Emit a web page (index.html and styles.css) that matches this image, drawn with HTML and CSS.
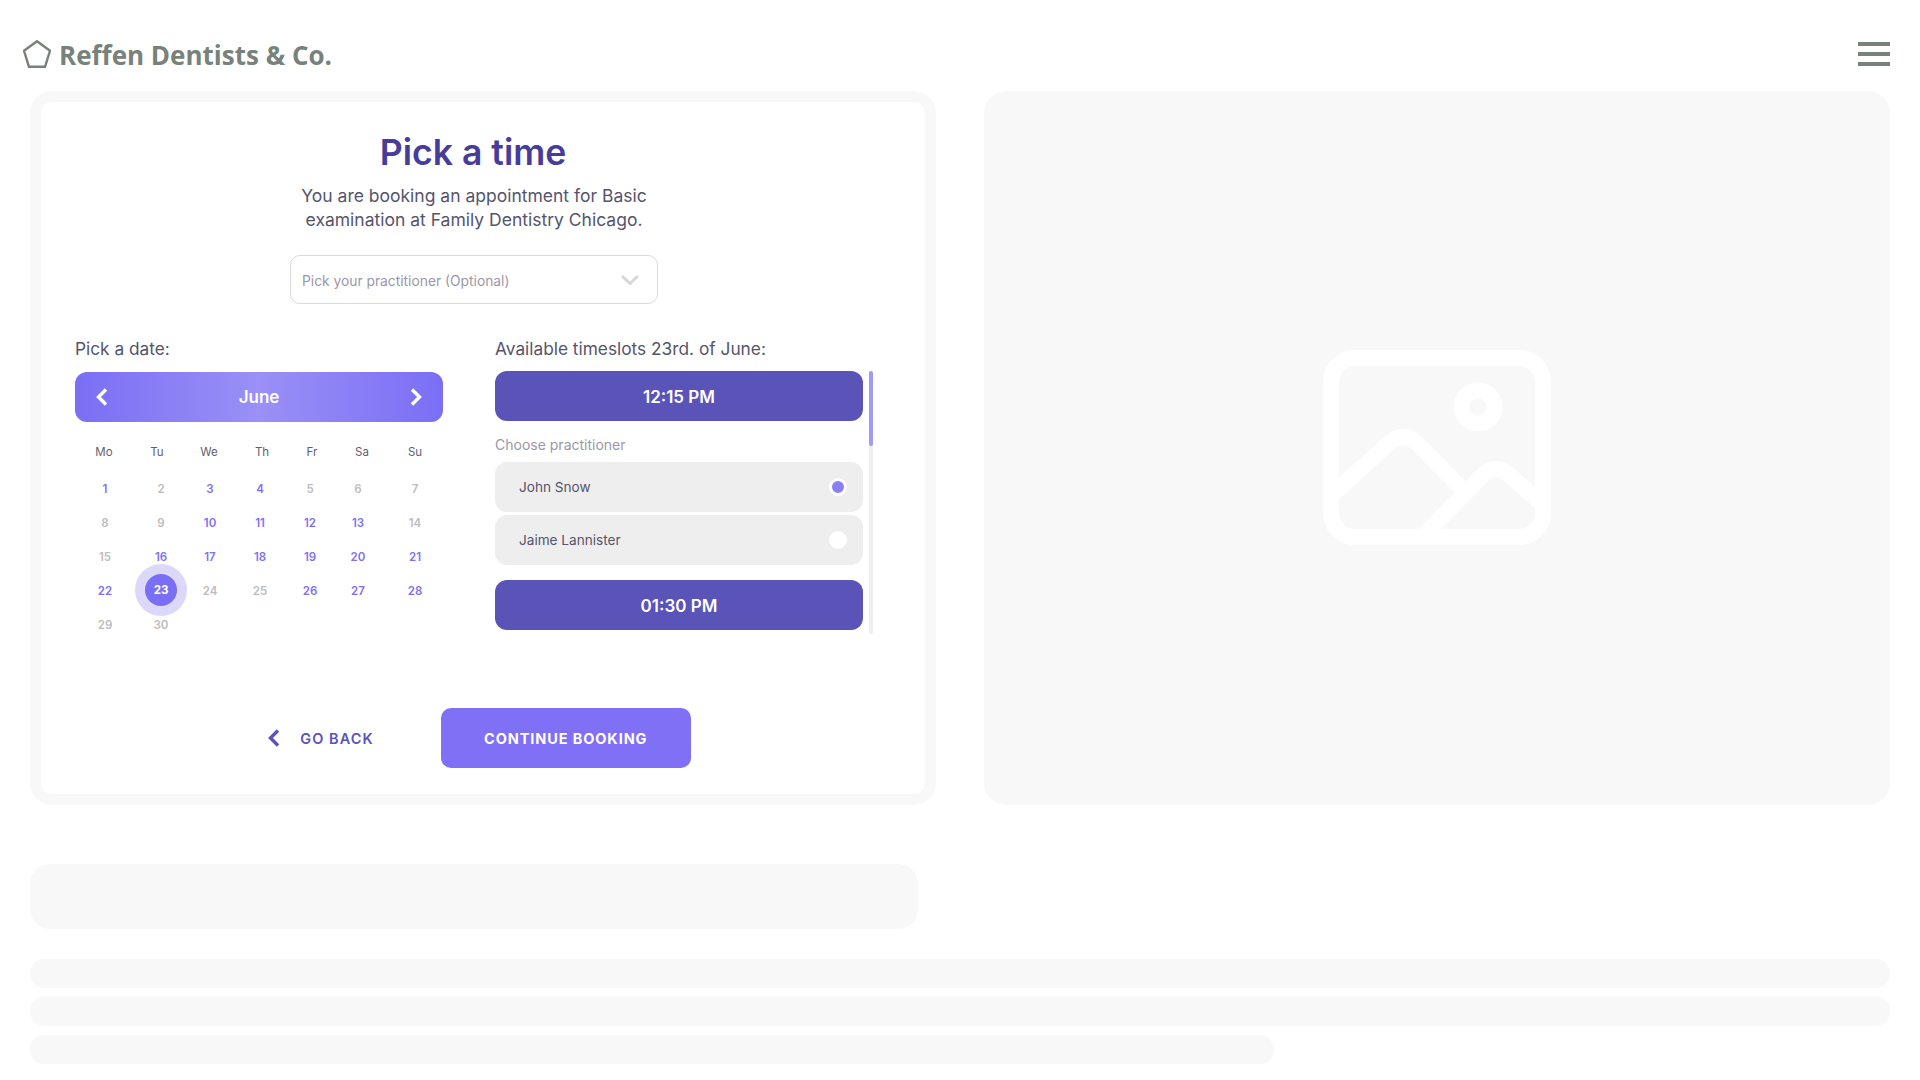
FILE: index.html
```html
<!DOCTYPE html>
<html lang="en">
<head>
    <meta charset="UTF-8">
    <meta name="viewport" content="width=device-width, initial-scale=1.0">
    <title>Reffen Dentists &amp; Co.</title>
    <link rel="stylesheet" href="styles.css">
</head>
<body>
    <header class="site-header">
        <div class="logo">
            <svg class="logo-icon" viewBox="0 0 28 28" fill="none" stroke="currentColor" stroke-width="2.4" stroke-linejoin="round">
                <path d="M14 1.2 L27 10.8 L22 26.8 L6 26.8 L1 10.8 Z"/>
            </svg>
            <span>Reffen Dentists &amp; Co.</span>
        </div>
        <div class="menu-button">
            <span></span>
            <span></span>
            <span></span>
        </div>
    </header>

    <main>
        <section class="top-row">
            <div class="booking-card">
                <h1>Pick a time</h1>
                <p class="intro">You are booking an appointment for Basic<br>examination at Family Dentistry Chicago.</p>

                <div class="select">
                    <span>Pick your practitioner (Optional)</span>
                    <svg class="select-arrow" viewBox="0 0 18 10" fill="none" stroke="currentColor" stroke-width="3">
                        <path d="M1 1 L9 8.5 L17 1"/>
                    </svg>
                </div>

                <div class="columns">
                    <div class="column">
                        <div class="label">Pick a date:</div>
                        <div class="month-bar">
                            <svg class="month-arrow" viewBox="0 0 12 18" fill="none" stroke="currentColor" stroke-width="3.4">
                                <path d="M10 1.5 L2.5 9 L10 16.5"/>
                            </svg>
                            <span>June</span>
                            <svg class="month-arrow" viewBox="0 0 12 18" fill="none" stroke="currentColor" stroke-width="3.4">
                                <path d="M2 1.5 L9.5 9 L2 16.5"/>
                            </svg>
                        </div>

                        <div class="weekdays">
                            <span>Mo</span><span>Tu</span><span>We</span><span>Th</span><span>Fr</span><span>Sa</span><span>Su</span>
                        </div>
                        <div class="days">
                            <span class="open">1</span><span>2</span><span class="open">3</span><span class="open">4</span><span>5</span><span>6</span><span>7</span>
                            <span>8</span><span>9</span><span class="open">10</span><span class="open">11</span><span class="open">12</span><span class="open">13</span><span>14</span>
                            <span>15</span><span class="open">16</span><span class="open">17</span><span class="open">18</span><span class="open">19</span><span class="open">20</span><span class="open">21</span>
                            <span class="open">22</span><span class="selected"><b>23</b></span><span>24</span><span>25</span><span class="open">26</span><span class="open">27</span><span class="open">28</span>
                            <span>29</span><span>30</span>
                        </div>
                    </div>

                    <div class="column">
                        <div class="label">Available timeslots 23rd. of June:</div>
                        <div class="slots-wrap">
                            <div class="slots">
                                <div class="slot">12:15 PM</div>
                                <div class="choose">Choose practitioner</div>
                                <div class="option">
                                    <span>John Snow</span>
                                    <span class="radio checked"></span>
                                </div>
                                <div class="option">
                                    <span>Jaime Lannister</span>
                                    <span class="radio"></span>
                                </div>
                                <div class="slot slot-next">01:30 PM</div>
                            </div>
                            <div class="scrollbar"><div class="scrollbar-thumb"></div></div>
                        </div>
                    </div>
                </div>

                <div class="actions">
                    <div class="go-back">
                        <svg class="back-arrow" viewBox="0 0 12 18" fill="none" stroke="currentColor" stroke-width="3.4">
                            <path d="M10 1.5 L2.5 9 L10 16.5"/>
                        </svg>
                        <span>GO BACK</span>
                    </div>
                    <div class="continue">CONTINUE BOOKING</div>
                </div>
            </div>

            <div class="image-placeholder">
                <svg class="image-icon" viewBox="0 0 228 195" fill="none" stroke="#fff" stroke-width="16">
                    <rect x="8" y="8" width="212" height="179" rx="24"/>
                    <circle cx="155" cy="57" r="16.5"/>
                    <path d="M8 146 L66 93 Q80 81 94 93 L146 146"/>
                    <path d="M99 187 L157 128 Q171 112 185 124 L220 154"/>
                </svg>
            </div>
        </section>

        <div class="block-placeholder"></div>

        <div class="line-placeholders">
            <div class="line"></div>
            <div class="line"></div>
            <div class="line line-short"></div>
        </div>
    </main>
</body>
</html>
```
FILE: styles.css
```css
:root {
    --purple: #7f70f6;
    --purple-dark: #5b54b8;
    --title: #483c9b;
    --text: #55546c;
    --muted: #9a98a8;
    --grey-text: #bdbdbd;
    --logo: #76827a;
    --placeholder: #f8f8f8;
}

* {
    margin: 0;
    padding: 0;
    box-sizing: border-box;
    font-family: 'Inter', 'Liberation Sans', sans-serif;
}

body {
    background-color: white;
    color: var(--text);
    height: 1080px;
    overflow: hidden;
}

.site-header {
    height: 91px;
    padding: 40px 30px 0 23px;
    display: flex;
    justify-content: space-between;
    align-items: flex-start;
}

.logo {
    display: flex;
    align-items: center;
    gap: 8px;
    height: 28px;
    color: var(--logo);
}

.logo span {
    margin-top: 2px;
    font-family: 'Open Sans', sans-serif;
    font-size: 26px;
    font-weight: 700;
}

.logo-icon {
    width: 28px;
    height: 28px;
}

.menu-button {
    width: 32px;
    padding-top: 2px;
    display: flex;
    flex-direction: column;
    gap: 6px;
}

.menu-button span {
    height: 4px;
    background-color: var(--logo);
}

main {
    padding: 0 30px;
}

.top-row {
    display: grid;
    grid-template-columns: 906px 906px;
    gap: 48px;
    height: 714px;
}

.booking-card {
    border: 11px solid var(--placeholder);
    border-radius: 22px;
    padding: 29px 52px 0 34px;
}

h1 {
    padding-right: 2px;
    color: var(--title);
    font-size: 35.6px;
    font-weight: 600;
    line-height: 44px;
    text-align: center;
}

.intro {
    margin-top: 9px;
    font-size: 17.5px;
    line-height: 24px;
    text-align: center;
}

.select {
    width: 368px;
    height: 49px;
    margin: 23px auto 0;
    padding: 2px 18px 0 11px;
    display: flex;
    justify-content: space-between;
    align-items: center;
    border: 1px solid #dadada;
    border-radius: 10px;
    font-size: 13.8px;
    color: var(--muted);
}

.select-arrow {
    width: 18px;
    height: 10px;
    margin-top: -2px;
    color: #d8d8d8;
}

.columns {
    margin-top: 33px;
    height: 297px;
    display: grid;
    grid-template-columns: 368px 378px;
    gap: 52px;
}

.label {
    font-size: 17.3px;
    line-height: 24px;
}

.month-bar {
    height: 50px;
    margin-top: 11px;
    padding: 0 21px;
    display: flex;
    justify-content: space-between;
    align-items: center;
    background: linear-gradient(90deg, #7a6ef5, #9a90f6 50%, #7a6ef5);
    border-radius: 12px;
    color: white;
    font-size: 17px;
    font-weight: 600;
}

.month-arrow {
    width: 12px;
    height: 18px;
}

.weekdays {
    margin-top: 22px;
    display: grid;
    grid-template-columns: 58px 48px 56px 50px 50px 50px 56px;
    font-size: 11.5px;
    line-height: 16px;
    text-align: center;
    color: #5f5e72;
}

.days {
    margin-top: 12px;
    display: grid;
    grid-template-columns: 60px 52px 46px 54px 46px 50px 64px;
    grid-auto-rows: 34px;
    align-items: center;
    font-size: 11.5px;
    font-weight: 600;
    text-align: center;
    color: var(--grey-text);
}

.days .open {
    color: var(--purple);
}

.days .selected {
    display: flex;
    justify-content: center;
}

.days .selected b {
    width: 32px;
    height: 32px;
    margin-top: -2px;
    border-radius: 50%;
    background-color: #7a6ef5;
    box-shadow: 0 0 0 10px #dcd8fa;
    color: white;
    font-weight: 700;
    line-height: 32px;
}

.slots-wrap {
    margin-top: 10px;
    display: flex;
    gap: 6px;
}

.slots {
    width: 368px;
    height: 263px;
    overflow: hidden;
}

.slot {
    height: 50px;
    padding-top: 1px;
    display: flex;
    justify-content: center;
    align-items: center;
    background-color: var(--purple-dark);
    border-radius: 12px;
    color: white;
    font-size: 17px;
    font-weight: 600;
}

.slot-next {
    margin-top: 15px;
}

.choose {
    margin-top: 14px;
    margin-bottom: 7px;
    font-size: 14px;
    line-height: 20px;
    color: var(--muted);
}

.option {
    height: 50px;
    margin-bottom: 3px;
    padding: 0 16px 0 24px;
    display: flex;
    justify-content: space-between;
    align-items: center;
    background-color: #eeeeee;
    border-radius: 12px;
    font-size: 13.6px;
}

.radio {
    width: 18px;
    height: 18px;
    border-radius: 50%;
    background-color: white;
}

.radio.checked {
    border: 3px solid white;
    background-color: #8a7ff5;
}

.scrollbar {
    width: 4px;
    height: 263px;
    background-color: #eeeeee;
    border-radius: 2px;
}

.scrollbar-thumb {
    height: 75px;
    background-color: #a29bf5;
    border-radius: 2px;
}

.actions {
    margin-top: 74px;
    padding-left: 11px;
    display: flex;
    justify-content: center;
    align-items: center;
    gap: 67px;
}

.go-back {
    display: flex;
    align-items: center;
    gap: 20px;
    color: var(--purple-dark);
    font-size: 14.5px;
    font-weight: 600;
    letter-spacing: 1.05px;
}

.back-arrow {
    width: 12px;
    height: 18px;
}

.continue {
    width: 250px;
    height: 60px;
    display: flex;
    justify-content: center;
    align-items: center;
    background-color: var(--purple);
    border-radius: 10px;
    color: white;
    font-size: 14.5px;
    font-weight: 700;
    letter-spacing: 0.9px;
}

.image-placeholder {
    display: flex;
    justify-content: center;
    align-items: center;
    background-color: var(--placeholder);
    border-radius: 22px;
}

.image-icon {
    width: 228px;
    height: 195px;
    margin-bottom: 2px;
}

.block-placeholder {
    width: 888px;
    height: 65px;
    margin-top: 59px;
    background-color: var(--placeholder);
    border-radius: 20px;
}

.line-placeholders {
    margin-top: 30px;
    display: flex;
    flex-direction: column;
    gap: 9px;
}

.line {
    height: 29px;
    background-color: var(--placeholder);
    border-radius: 14px;
}

.line-short {
    width: 1244px;
}
```
